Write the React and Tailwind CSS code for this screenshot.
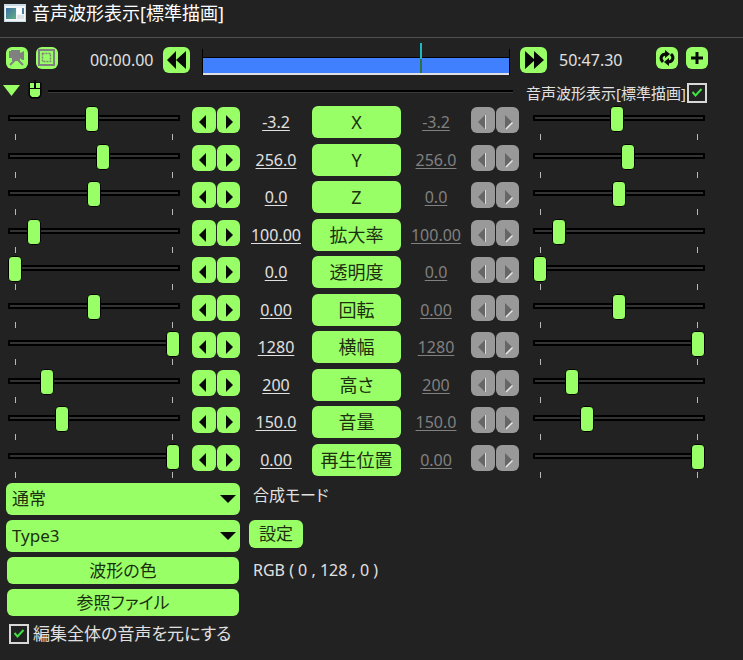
import React, { useState } from 'react';

const PARAMS = [
  { label: 'X', value: '-3.2', pos: 49 },
  { label: 'Y', value: '256.0', pos: 56 },
  { label: 'Z', value: '0.0', pos: 50 },
  { label: '拡大率', value: '100.00', pos: 12 },
  { label: '透明度', value: '0.0', pos: 0 },
  { label: '回転', value: '0.00', pos: 50 },
  { label: '横幅', value: '1280', pos: 100 },
  { label: '高さ', value: '200', pos: 20 },
  { label: '音量', value: '150.0', pos: 30 },
  { label: '再生位置', value: '0.00', pos: 100 },
];

const GREEN_BUTTON = 'bg-[#99ff66] text-[#1c3010] cursor-pointer hover:bg-[#adff85]';

const AppIcon = () => (
  <svg width="22" height="18" viewBox="0 0 22 18" aria-hidden="true">
    <defs>
      <linearGradient id="appIconFill" x1="0" y1="0" x2="1" y2="1">
        <stop offset="0" stopColor="#3f6fa8" />
        <stop offset="1" stopColor="#5fb080" />
      </linearGradient>
    </defs>
    <rect width="22" height="18" fill="#c9dbe4" />
    <rect x="1" y="2" width="20" height="15" fill="#f2f6f8" />
    <rect x="2" y="4" width="10" height="11" fill="url(#appIconFill)" />
    <rect x="13" y="4" width="5" height="6" fill="#ffffff" />
    <rect x="18" y="4" width="2" height="6" fill="#4f7f9c" />
    <rect x="13" y="11" width="7" height="4" fill="#dde3e6" />
  </svg>
);

const CameraIcon = () => (
  <svg width="22" height="22" viewBox="0 0 22 22" aria-hidden="true">
    <path d="M3 4h2V3h9v3l4-2v9h-2l-2-2v3H6v-3H3z" fill="#808080" />
    <path d="M10 12l-6 6M11 12l6 6" stroke="#808080" strokeWidth="2" />
  </svg>
);

const FrameIcon = () => (
  <svg width="22" height="22" viewBox="0 0 22 22" fill="none" stroke="#808080" aria-hidden="true">
    <rect x="3" y="3" width="15" height="15" strokeWidth="2" />
    <rect x="6.5" y="6.5" width="8" height="8" strokeWidth="1.5" strokeDasharray="2 1" />
  </svg>
);

// two arrows chasing each other
const LinkIcon = () => (
  <svg width="22" height="22" viewBox="0 0 22 22" aria-hidden="true">
    <path d="M7 15C3 11 6 7 10 7M15 7c4 4 1 8-3 8" fill="none" stroke="#0a0a0a" strokeWidth="3" />
    <path d="M9 3l5 4-5 4zM13 19l-5-4 5-4z" fill="#0a0a0a" />
  </svg>
);

const MouseIcon = () => (
  <svg width="14" height="19" viewBox="0 0 14 19" aria-hidden="true">
    <path d="M7 0v3M1 3h12v12l-2 3H3l-2-3z" fill="#000" stroke="#000" strokeWidth="1" />
    <path d="M2 3h4v5H2zM8 3h4v5H8zM2 9h10v6l-2 2H4l-2-2z" fill="#99ff66" />
  </svg>
);

const IconButton = ({ label, className = '', children }) => (
  <button
    type="button"
    aria-label={label}
    className={`flex items-center justify-center shrink-0 rounded-md ${GREEN_BUTTON} ${className}`}
  >
    {children}
  </button>
);

const Checkbox = ({ id, defaultChecked }) => (
  <span className="relative block size-5 shrink-0">
    <input
      id={id}
      type="checkbox"
      defaultChecked={defaultChecked}
      className="peer block size-5 appearance-none border-2 border-[#d8d8d8] bg-[#222222]"
    />
    <svg
      width="20"
      height="20"
      viewBox="0 0 20 20"
      className="pointer-events-none absolute inset-0 hidden peer-checked:block"
      aria-hidden="true"
    >
      <path d="M5.500 9l3 3.500L14.500 6" fill="none" stroke="#3fe03f" strokeWidth="2" />
    </svg>
  </span>
);

const StepButtons = ({ name, disabled = false, className = '' }) => {
  const style = disabled ? 'bg-[#999999]' : 'bg-[#99ff66] cursor-pointer hover:bg-[#adff85]';
  const fill = disabled ? '#666666' : '#0a0a0a';

  return (
    <div className={`mt-[5px] flex gap-px ${className}`}>
      <button type="button" disabled={disabled} aria-label={`${name} -`} className={`h-[26px] flex-1 rounded-md ${style}`}>
        <svg width="23" height="26" viewBox="0 0 23 26" aria-hidden="true">
          <path d="M7 15l7-7v14z" fill={fill} />
          {disabled && <path d="M14.500 8v14" stroke="#d5e2e2" strokeWidth="1" />}
        </svg>
      </button>
      <button type="button" disabled={disabled} aria-label={`${name} +`} className={`h-[26px] flex-1 rounded-md ${style}`}>
        <svg width="23" height="26" viewBox="0 0 23 26" aria-hidden="true">
          <path d="M9 8l7 7-7 7z" fill={fill} />
          {disabled && <path d="M16.500 15.500L10 22" stroke="#e5eaea" strokeWidth="1.500" />}
        </svg>
      </button>
    </div>
  );
};

const Slider = ({ label, value, onChange }) => (
  <div className="relative mt-1">
    <div className="absolute inset-x-0 top-[9px] h-[6px] border-2 border-black bg-[#333333]" />
    <input
      type="range"
      min="0"
      max="100"
      value={value}
      aria-label={label}
      onChange={(e) => onChange(Number(e.target.value))}
      className="relative block h-[26px] w-full appearance-none bg-transparent [&::-webkit-slider-thumb]:h-[26px] [&::-webkit-slider-thumb]:w-[14px] [&::-webkit-slider-thumb]:appearance-none [&::-webkit-slider-thumb]:rounded-sm [&::-webkit-slider-thumb]:border [&::-webkit-slider-thumb]:border-black [&::-webkit-slider-thumb]:bg-[#99ff66]"
    />
    <div className="mt-[2px] flex justify-between px-[7px]">
      <span className="h-[6px] w-px bg-[#b8b8b8]" />
      <span className="h-[6px] w-px bg-[#b8b8b8]" />
    </div>
  </div>
);

const ParamRow = ({ param }) => {
  const [pos, setPos] = useState(param.pos);

  return (
    <div className="grid grid-cols-[1fr_60px_72px_89px_70px_62px_1fr] items-start">
      <Slider label={`${param.label} 左`} value={pos} onChange={setPos} />
      <StepButtons name={param.label} className="pl-3" />
      <input
        type="text"
        defaultValue={param.value}
        aria-label={`${param.label} 開始値`}
        className="mt-1 h-8 w-full bg-transparent text-center text-base text-[#e0e0e0] underline underline-offset-2"
      />
      <button type="button" className={`mt-1 h-8 rounded-md text-lg leading-8 ${GREEN_BUTTON}`}>
        {param.label}
      </button>
      <input
        type="text"
        readOnly
        value={param.value}
        aria-label={`${param.label} 終了値`}
        className="mt-1 h-8 w-full bg-transparent text-center text-base text-[#808080] underline underline-offset-2"
      />
      <StepButtons name={`${param.label} 終了`} disabled className="pr-3.5" />
      <Slider label={`${param.label} 右`} value={pos} onChange={setPos} />
    </div>
  );
};

const Dropdown = ({ id, options, label }) => (
  <div className="relative">
    <select
      id={id}
      aria-label={label}
      className={`block h-8 w-full appearance-none rounded-md px-1.5 text-[17px] ${GREEN_BUTTON}`}
    >
      {options.map((option) => (
        <option key={option}>{option}</option>
      ))}
    </select>
    <svg width="16" height="8" viewBox="0 0 16 8" className="pointer-events-none absolute top-3 right-1" aria-hidden="true">
      <path d="M0 0h16L8 8z" fill="#0a0a0a" />
    </svg>
  </div>
);

const Timeline = () => (
  <div className="relative h-[26px] flex-1 border-x border-black">
    <div className="absolute inset-x-0 bottom-0 h-[18px] border-t border-b-2 border-t-black border-b-[#e0e0e0] bg-[#4080ff]" />
    <div className="absolute -top-[6px] left-[71%] h-4 w-[2px] bg-[#20b8c0]" />
    <div className="absolute top-[10px] left-[71%] h-[14px] w-[2px] bg-[#2f7040]" />
  </div>
);

export default function App() {
  return (
    <div className="min-h-screen bg-[#222222] font-['Noto_Sans','Noto_Sans_CJK_JP',sans-serif] text-[#e0e0e0] [font-feature-settings:'palt']">
      {/* Title bar */}
      <header className="flex h-[38px] items-start gap-1.5 border-b border-[#505050] pt-1 pl-1">
        <AppIcon />
        <h1 className="text-lg leading-[18px] text-white">音声波形表示[標準描画]</h1>
      </header>

      {/* Playback range */}
      <div className="flex items-start pt-[9px] pr-[35px] pl-1.5">
        <div className="flex gap-2">
          <IconButton label="カメラ制御" className="size-[22px]"><CameraIcon /></IconButton>
          <IconButton label="クリッピング" className="size-[22px]"><FrameIcon /></IconButton>
        </div>
        <span className="ml-8 w-[73px] text-base leading-[26px]">00:00.00</span>
        <IconButton label="前の区間" className="h-[26px] w-[27px]">
          <svg width="20" height="18" viewBox="0 0 20 18" aria-hidden="true">
            <path d="M0 9l9-9v18zM9 9l10-9v18z" fill="#0a0a0a" />
          </svg>
        </IconButton>
        <div className="flex flex-1 pt-0.5 pr-[10px] pl-3">
          <Timeline />
        </div>
        <IconButton label="次の区間" className="h-[26px] w-[27px]">
          <svg width="20" height="18" viewBox="0 0 20 18" aria-hidden="true">
            <path d="M1 0l10 9-10 9zM10 0l10 9-10 9z" fill="#0a0a0a" />
          </svg>
        </IconButton>
        <span className="ml-3 w-[97px] text-base leading-[26px]">50:47.30</span>
        <div className="flex gap-2">
          <IconButton label="リンク" className="size-[22px]"><LinkIcon /></IconButton>
          <IconButton label="追加" className="size-[22px]">
            <svg width="22" height="22" viewBox="0 0 22 22" aria-hidden="true">
              <path d="M11 5v12M5 11h12" stroke="#0a0a0a" strokeWidth="3" />
            </svg>
          </IconButton>
        </div>
      </div>

      {/* Filter heading */}
      <div className="flex h-[27px] items-center pt-[9px] pr-9 pl-[3px]">
        <button type="button" aria-label="折りたたむ" className="-mt-1.5">
          <svg width="17" height="11" viewBox="0 0 17 11" aria-hidden="true">
            <path d="M0 0h17L8.500 11z" fill="#99ff66" />
          </svg>
        </button>
        <span className="-mt-2 ml-2"><MouseIcon /></span>
        <div className="mr-[13px] -mt-1 ml-1.5 h-[3px] flex-1 border-t-2 border-b border-t-black border-b-[#3a3a3a]" />
        <label htmlFor="filterEnabled" className="w-[161px] text-[15px] leading-5">音声波形表示[標準描画]</label>
        <Checkbox id="filterEnabled" defaultChecked />
      </div>

      {/* Parameters */}
      <div className="grid h-[375px] grid-rows-10 pr-[38px] pl-2">
        {PARAMS.map((param) => (
          <ParamRow key={param.label} param={param} />
        ))}
      </div>

      {/* Options */}
      <div className="px-1.5 pt-1.5">
        <div className="grid grid-cols-[234px_1fr] gap-x-[9px] gap-y-[5px]">
          <Dropdown id="blendMode" label="合成モード" options={['通常', '加算', '減算', '乗算']} />
          <label htmlFor="blendMode" className="pl-1 text-base leading-6">合成モード</label>
          <Dropdown id="waveType" label="波形タイプ" options={['Type3', 'Type1', 'Type2']} />
          <button type="button" className={`h-7 w-[54px] rounded-md text-[17px] ${GREEN_BUTTON}`}>設定</button>
          <button type="button" className={`mx-px h-[27px] rounded-md text-[17px] ${GREEN_BUTTON}`}>波形の色</button>
          <span className="pl-1 text-base leading-[27px]">RGB ( 0 , 128 , 0 )</span>
          <button type="button" className={`mx-px h-[27px] rounded-md text-[17px] ${GREEN_BUTTON}`}>参照ファイル</button>
        </div>
        <div className="mt-2 flex items-center gap-1 pl-[3px]">
          <Checkbox id="wholeAudio" defaultChecked />
          <label htmlFor="wholeAudio" className="text-[17px] leading-5">編集全体の音声を元にする</label>
        </div>
      </div>
    </div>
  );
}
